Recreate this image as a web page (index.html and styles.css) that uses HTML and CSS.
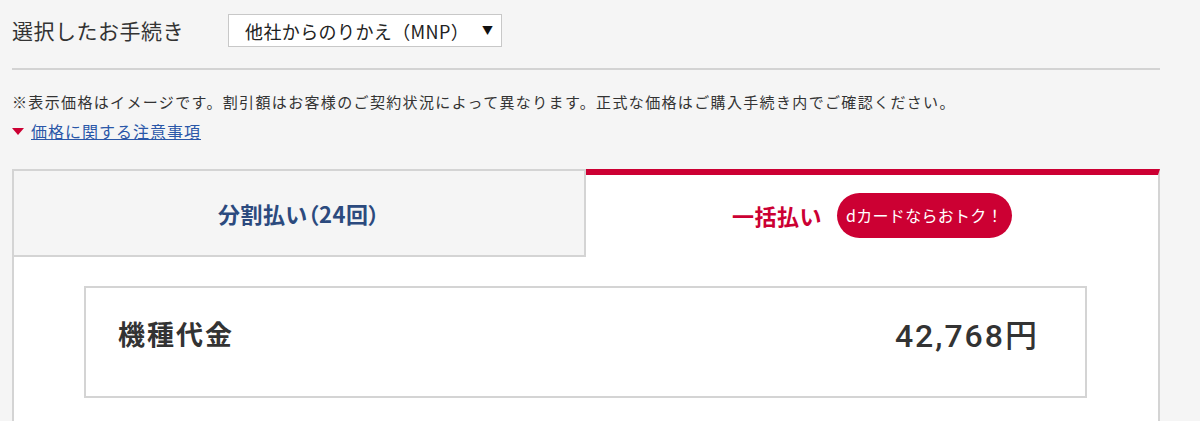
FILE: index.html
```html
<!DOCTYPE html>
<html lang="ja">
<head>
<meta charset="utf-8">
<title>お手続き選択</title>
<link rel="stylesheet" href="styles.css">
</head>
<body>
<div class="page">
  <div class="selector-row">
    <div class="selector-label">選択したお手続き</div>
    <div class="select-box">
      <span class="select-text">他社からのりかえ（MNP）</span>
      <span class="select-arrow">▼</span>
    </div>
  </div>
  <hr class="divider">
  <p class="note">※表示価格はイメージです。割引額はお客様のご契約状況によって異なります。正式な価格はご購入手続き内でご確認ください。</p>
  <div class="caution">
    <span class="caution-arrow"></span>
    <a class="caution-link" href="#">価格に関する注意事項</a>
  </div>
  <div class="tabs">
    <div class="tab tab-inactive"><span class="tab-label">分割払い（24回）</span></div>
    <div class="tab tab-active">
      <span class="tab-label tab-label-red">一括払い</span>
      <span class="pill">dカードならおトク！</span>
    </div>
  </div>
  <div class="panel">
    <div class="price-box">
      <div class="price-row">
        <span class="price-label">機種代金</span>
        <span class="price-value">42,768円</span>
      </div>
    </div>
  </div>
</div>
</body>
</html>
```
FILE: styles.css
```css
html, body {
  margin: 0;
  padding: 0;
  background: #f5f5f5;
}
body {
  font-family: "Noto Sans CJK JP", "Noto Sans", sans-serif;
  color: #333333;
}
.page {
  width: 1148px;
  padding-left: 12px;
}
.selector-row {
  display: flex;
  align-items: center;
  padding-top: 14px;
  height: 33px;
}
.selector-label {
  width: 216px;
  font-size: 21px;
  letter-spacing: 0.5px;
  line-height: 33px;
  color: #333;
}
.select-box {
  box-sizing: border-box;
  width: 274px;
  height: 33px;
  background: #ffffff;
  border: 1px solid #c8c8c8;
  display: flex;
  align-items: center;
  justify-content: space-between;
  padding: 0 8px 0 16px;
}
.select-text {
  font-size: 18px;
  letter-spacing: 0.4px;
  line-height: 1;
  color: #222;
}
.select-arrow {
  font-size: 11px;
  color: #111;
  line-height: 1;
}
.divider {
  margin: 21px 0 0 0;
  border: 0;
  height: 2px;
  background: #d3d3d3;
}
.note {
  margin: 20px 0 0 0;
  font-size: 15px;
  letter-spacing: 1.35px;
  line-height: 23px;
  color: #333;
}
.caution {
  display: flex;
  align-items: center;
  height: 24px;
  margin-top: 6px;
}
.caution-arrow {
  width: 0;
  height: 0;
  border-left: 6px solid transparent;
  border-right: 6px solid transparent;
  border-top: 7px solid #cc0033;
  margin-right: 7px;
  margin-top: 1px;
}
.caution-link {
  font-size: 16px;
  letter-spacing: 1px;
  color: #2a57a8;
  text-decoration: underline;
  line-height: 24px;
}
.tabs {
  display: flex;
  margin-top: 26px;
  height: 88px;
}
.tab {
  box-sizing: border-box;
  width: 574px;
  height: 88px;
  display: flex;
  align-items: center;
  justify-content: center;
}
.tab-inactive {
  background: #f5f5f5;
  border: 2px solid #d4d4d4;
}
.tab-active {
  background: #ffffff;
  border-top: 6px solid #cc0033;
  border-right: 2px solid #d4d4d4;
  padding-bottom: 2px;
}
.tab-label {
  font-size: 22px;
  font-weight: 700;
  color: #2c4a7e;
  font-feature-settings: "palt";
  letter-spacing: 0.5px;
  line-height: 1;
}
.tab-label-red {
  color: #cc0033;
  font-feature-settings: normal;
  letter-spacing: 0.5px;
}
.pill {
  margin-left: 15px;
  height: 45px;
  width: 175px;
  box-sizing: border-box;
  border-radius: 23px;
  background: #cc0033;
  color: #ffffff;
  font-size: 16px;
  letter-spacing: 0.3px;
  display: flex;
  align-items: center;
  justify-content: center;
}
.panel {
  background: #ffffff;
  border-left: 2px solid #d4d4d4;
  border-right: 2px solid #d4d4d4;
  padding: 29px 71px 30px 70px;
}
.price-box {
  box-sizing: border-box;
  height: 112px;
  border: 2px solid #d4d4d4;
  padding: 28px 46px 0 32px;
}
.price-row {
  display: flex;
  align-items: center;
  justify-content: space-between;
  height: 34px;
}
.price-label {
  font-size: 27px;
  font-weight: 700;
  letter-spacing: 2px;
  color: #333;
}
.price-value {
  font-family: "Roboto", "Noto Sans CJK JP", sans-serif;
  font-size: 32px;
  font-weight: 500;
  letter-spacing: 2px;
  color: #333;
}
```
